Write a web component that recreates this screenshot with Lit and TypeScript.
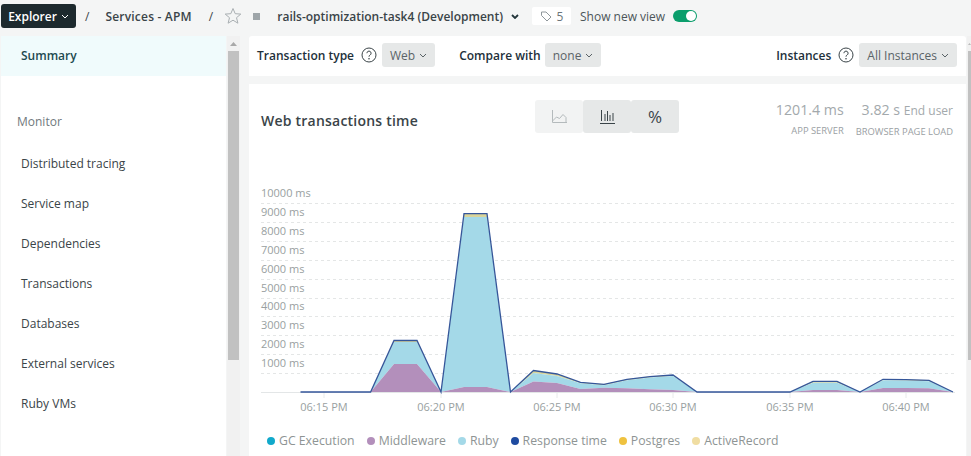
import { LitElement, css, html, svg } from 'lit';
import { customElement } from 'lit/decorators.js';

// [x, response, middleware, ruby top]
const POINTS = [
  [370.6, 392, 392, 392],
  [394, 340.5, 364, 342],
  [417, 340.5, 364, 342],
  [441, 392, 392, 392],
  [464, 213.7, 387, 217],
  [487, 213.7, 387, 217],
  [510.5, 392, 392, 392],
  [533.5, 370.5, 381.5, 373],
  [557, 374, 383, 376],
  [580.5, 382.3, 389, 383.3],
  [604, 384.3, 387.7, 385.3],
  [627, 379.3, 388.3, 380.3],
  [650, 376.6, 389.3, 377.6],
  [673, 375, 390, 376],
  [697, 392, 392, 392],
  [790, 392, 392, 392],
  [813, 381.3, 390, 382.8],
  [837, 381.3, 390, 382.8],
  [860, 392, 392, 392],
  [883, 379.3, 388, 380.3],
  [906, 379.6, 388, 380.6],
  [929, 380.3, 388.3, 381.3],
  [953, 392, 392, 392],
];

const GRID = [
  [203.5, 193, '10000 ms'],
  [222.5, 212, '9000 ms'],
  [241.5, 231, '8000 ms'],
  [260.5, 250, '7000 ms'],
  [279.5, 269, '6000 ms'],
  [298.5, 288, '5000 ms'],
  [316.5, 306, '4000 ms'],
  [335.5, 325, '3000 ms'],
  [354.5, 344, '2000 ms'],
  [373.5, 363, '1000 ms'],
] as const;

const TICKS = [
  [324, '06:15 PM'],
  [441, '06:20 PM'],
  [557, '06:25 PM'],
  [673, '06:30 PM'],
  [790, '06:35 PM'],
  [906, '06:40 PM'],
] as const;

const LEGEND = [
  ['GC Execution', '#11a9cb'],
  ['Middleware', '#b38fbb'],
  ['Ruby', '#a4d9e8'],
  ['Response time', '#1f4ba0'],
  ['Postgres', '#efc23f'],
  ['ActiveRecord', '#f0dda2'],
];

const NAV = ['Distributed tracing', 'Service map', 'Dependencies', 'Transactions', 'Databases', 'External services', 'Ruby VMs'];

const line = (top: number) => POINTS.map((p) => `${p[0]},${p[top]}`).join(' ');
const band = (top: number, bottom: number) =>
  line(top) + ' ' + [...POINTS].reverse().map((p) => `${p[0]},${p[bottom]}`).join(' ');

const chevron = html`<svg class="chev" width="8" height="5" viewBox="0 0 8 5"><path d="M1 1l3 3 3-3" fill="none" stroke="currentColor"/></svg>`;
const help = html`<svg class="help" width="16" height="16" viewBox="0 0 16 16"><circle cx="8" cy="8" r="7" fill="none" stroke="#3a4448"/><path d="M5.900 6.200a2.100 2.100 0 1 1 3.200 1.800c-.7.4-1.100.8-1.100 1.700" fill="none" stroke="#3a4448"/><circle cx="8" cy="11.800" r=".8" fill="#3a4448"/></svg>`;

@customElement('app-root')
export class AppRoot extends LitElement {
  static styles = css`
    :host {
      display: block;
      width: 971px;
      height: 456px;
      overflow: hidden;
      background: #f4f5f5;
      font-family: 'Open Sans', sans-serif;
      font-size: 12px;
      color: #3a4448;
    }
    .topbar {
      height: 36px;
      display: flex;
      align-items: center;
      padding: 0 0 4px 1px;
      box-sizing: border-box;
      font-weight: 600;
    }
    .explorer {
      width: 75px;
      height: 24px;
      background: #1d2a2e;
      color: #fff;
      border-radius: 3px;
      display: flex;
      align-items: center;
      justify-content: center;
      gap: 4px;
    }
    .sep { font-weight: 400; }
    .sep1 { margin-left: 9px; }
    .crumb { margin-left: 16px; letter-spacing: .2px; }
    .sep2 { margin-left: 17px; }
    .star { margin-left: 11px; }
    .square {
      width: 7px;
      height: 7px;
      background: #9ea5a9;
      margin-left: 11px;
    }
    .app { margin-left: 17px; }
    .app-chev { margin-left: 8px; color: #22353a; display: flex; }
    .app-chev path { stroke-width: 1.8; }
    .tag {
      margin-left: 13px;
      width: 39px;
      height: 18px;
      background: #fff;
      border-radius: 2px;
      display: flex;
      align-items: center;
      justify-content: center;
      gap: 5px;
      font-weight: 400;
      color: #6b7579;
    }
    .show {
      margin-left: 9px;
      font-weight: 400;
      color: #4c5559;
    }
    .toggle {
      margin-left: 8px;
      width: 24px;
      height: 12px;
      border-radius: 6px;
      background: #0b9e6c;
      display: flex;
      justify-content: flex-end;
      align-items: center;
      padding-right: 1px;
      box-sizing: border-box;
    }
    .knob {
      width: 10px;
      height: 10px;
      background: #fff;
      border-radius: 50%;
    }
    .body {
      display: flex;
      height: 420px;
    }
    .side {
      width: 226px;
      box-sizing: border-box;
      border-left: 1px solid #f4f5f5;
      background: #fff;
      flex: none;
    }
    .summary {
      height: 40px;
      padding: 0 0 2px 20px;
      box-sizing: border-box;
      display: flex;
      align-items: center;
      background: #f0fbfc;
      color: #1d4a50;
      font-weight: 600;
    }
    .monitor {
      margin-top: 36px;
      padding-left: 16px;
      height: 20px;
      line-height: 20px;
      color: #71797d;
    }
    .nav {
      margin-top: 12px;
      display: flex;
      flex-direction: column;
    }
    .nav-item {
      height: 40px;
      line-height: 40px;
      padding-left: 20px;
      color: #3a4448;
    }
    .bar {
      flex: none;
      width: 13px;
      margin-left: 1px;
      background: #f1f1f1;
    }
    .bar-up {
      height: 15px;
      display: flex;
      align-items: center;
      justify-content: center;
    }
    .bar-thumb {
      width: 11px;
      height: 309px;
      margin: 0 auto;
      background: #c1c1c1;
    }
    .main {
      margin-left: 9px;
      width: 717px;
      flex: none;
    }
    .filters {
      height: 40px;
      background: #fff;
      border-radius: 3px 3px 0 0;
      display: flex;
      align-items: center;
      padding: 0 9px 2px 8px;
      box-sizing: border-box;
      font-weight: 600;
      color: #22303a;
    }
    .help { margin: 0 5px 0 7px; }
    .select {
      height: 24px;
      padding: 0 8px;
      background: #e6e8e8;
      border-radius: 3px;
      display: flex;
      align-items: center;
      gap: 4px;
      font-weight: 400;
      color: #5a6367;
    }
    .compare { margin-left: 24px; margin-right: 4px; }
    .spacer { flex: 1; }
    .card {
      margin-top: 8px;
      height: 372px;
      background: #fff;
      position: relative;
    }
    .head {
      display: flex;
      height: 66px;
      box-sizing: border-box;
      padding: 16px 13px 0 12px;
    }
    .title {
      font-size: 14px;
      font-weight: 600;
      margin-top: 11px;
      width: 274px;
      color: #3a4448;
      letter-spacing: .22px;
    }
    .modes { display: flex; height: 33px; }
    .mode {
      width: 48px;
      background: #e6e8e8;
      border-radius: 3px;
      display: flex;
      align-items: center;
      justify-content: center;
      font-size: 17px;
      color: #3a4448;
    }
    .mode.off { background: #f2f3f3; }
    .stats {
      margin-left: auto;
      display: flex;
      gap: 12px;
      text-align: right;
      color: #a3a9ac;
    }
    .big { font-size: 14.200px; line-height: 19px; }
    .small-inline { font-size: 12px; }
    .cap { font-size: 9.400px; margin-top: 5px; color: #9aa0a3; }
    .chart {
      position: absolute;
      left: -249px;
      top: -84px;
      width: 971px;
      height: 456px;
    }
    .chart text {
      font-family: 'Open Sans', sans-serif;
      font-size: 11px;
      fill: #999fa1;
    }
    .legend {
      position: absolute;
      left: 18px;
      top: 348px;
      display: flex;
      gap: 12px;
      font-size: 12.250px;
      color: #8e9494;
    }
    .leg { display: flex; align-items: center; gap: 4px; }
    .dot { width: 8px; height: 8px; border-radius: 50%; }
    .edge {
      margin-left: 1px;
      flex: 1;
      background: #f1f1f1;
      overflow: hidden;
    }
    .edge-up {
      height: 15px;
      padding-left: 1px;
      display: flex;
      align-items: center;
    }
    .edge-thumb {
      margin-left: 1px;
      height: 309px;
      background: #c1c1c1;
    }
  `;

  private renderChart() {
    return html`<svg class="chart" viewBox="0 0 971 456">
      ${GRID.map(([y, ty, label]) => svg`
        <line x1="261" x2="955" y1=${y} y2=${y} stroke="#e4e6e6" stroke-dasharray="3 3" />
        <text x="261" y=${ty + 4}>${label}</text>`)}
      <line x1="261" x2="955" y1="392.5" y2="392.5" stroke="#e3e6e7" />
      ${TICKS.map(([x, label]) => svg`
        <line x1=${x} x2=${x} y1="393" y2="398" stroke="#e8eaeb" />
        <text x=${x} y="411" text-anchor="middle">${label}</text>`)}
      <polygon points=${band(1, 3)} fill="#d9d49a" />
      <polygon points=${band(3, 2)} fill="#a4d9e8" />
      <polygon points=${line(2)} fill="#b38fbb" />
      <polyline points=${'300.5,392 ' + line(1)} fill="none" stroke="#35569a" stroke-width="1.3" />
    </svg>`;
  }

  render() {
    return html`
      <div class="topbar">
        <div class="explorer">Explorer ${chevron}</div>
        <span class="sep sep1">/</span>
        <span class="crumb">Services - APM</span>
        <span class="sep sep2">/</span>
        <svg class="star" width="18" height="18" viewBox="0 0 18 18"><path d="M9 1.500l2.200 5.200 5.600.4-4.300 3.600 1.400 5.500L9 13.200l-4.900 3 1.400-5.500L1.200 7.100l5.600-.4z" fill="none" stroke="#a9afb2"/></svg>
        <span class="square"></span>
        <span class="app">rails-optimization-task4 (Development)</span>
        <span class="app-chev">${chevron}</span>
        <span class="tag">
          <svg width="12" height="12" viewBox="0 0 12 12"><path d="M1.500 2h4.500l5 5-4 4-5.500-5.500z" fill="none" stroke="#8f979b"/></svg>
          5
        </span>
        <span class="show">Show new view</span>
        <span class="toggle"><span class="knob"></span></span>
      </div>
      <div class="body">
        <div class="side">
          <div class="summary">Summary</div>
          <div class="monitor">Monitor</div>
          <div class="nav">${NAV.map((n) => html`<div class="nav-item">${n}</div>`)}</div>
        </div>
        <div class="bar">
          <div class="bar-up"><svg width="7" height="4" viewBox="0 0 7 4"><path d="M3.500 0L7 4H0z" fill="#a8a8a8"/></svg></div>
          <div class="bar-thumb"></div>
        </div>
        <div class="main">
          <div class="filters">
            <span>Transaction type</span>${help}
            <span class="select">Web ${chevron}</span>
            <span class="compare">Compare with</span>
            <span class="select">none ${chevron}</span>
            <span class="spacer"></span>
            <span>Instances</span>${help}
            <span class="select">All Instances ${chevron}</span>
          </div>
          <div class="card">
            <div class="head">
              <div class="title">Web transactions time</div>
              <div class="modes">
                <div class="mode off"><svg width="15" height="14" viewBox="0 0 15 14"><path d="M.5 0v12.500H15M.5 11l4-4 3 1.500L11 4.500l3 3v5" fill="none" stroke="#b4babc"/></svg></div>
                <div class="mode"><svg width="15" height="14" viewBox="0 0 15 14"><path d="M0 13.500H15M1.500 0v11M5 4v7M7.500 1v10M10 5v6M13 3v8" fill="none" stroke="#3a4448"/></svg></div>
                <div class="mode">%</div>
              </div>
              <div class="stats">
                <div><div class="big">1201.4 ms</div><div class="cap">APP SERVER</div></div>
                <div><div class="big">3.82 s <span class="small-inline">End user</span></div><div class="cap">BROWSER PAGE LOAD</div></div>
              </div>
            </div>
            ${this.renderChart()}
            <div class="legend">
              ${LEGEND.map(([n, c]) => html`<div class="leg"><span class="dot" style="background:${c}"></span>${n}</div>`)}
            </div>
          </div>
        </div>
        <div class="edge">
          <div class="edge-up"><svg width="7" height="4" viewBox="0 0 7 4"><path d="M3.500 0L7 4H0z" fill="#a8a8a8"/></svg></div>
          <div class="edge-thumb"></div>
        </div>
      </div>
    `;
  }
}
